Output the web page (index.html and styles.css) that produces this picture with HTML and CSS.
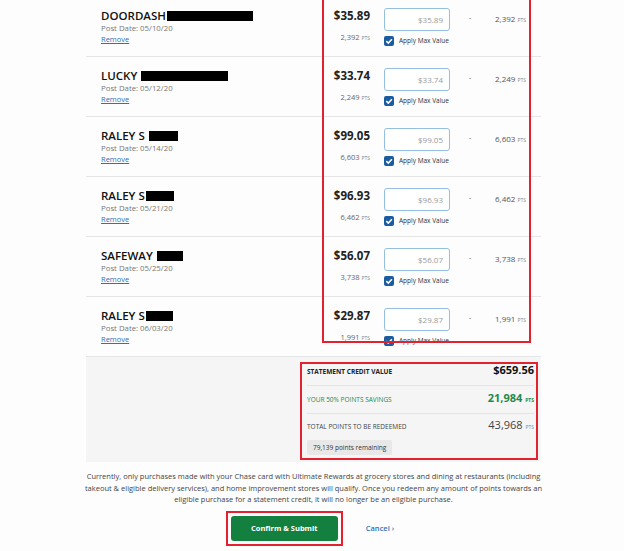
FILE: index.html
```html
<!DOCTYPE html>
<html lang="en">
  <head>
    <meta charset="UTF-8" />
    <meta name="viewport" content="width=device-width, initial-scale=1.0" />
    <title>Pay Yourself Back - Review</title>
    <link rel="stylesheet" href="styles.css">
  </head>
  <body>
    <div class="page">
      <div class="transactions">
        <!-- Highlighted region drawn over the value columns -->
        <div class="mark mark-values"></div>

        <div class="txn-row">
          <div class="merchant">
            <div class="merchant-name">DOORDASH<span class="redact" style="width: 86px"></span></div>
            <div class="post-date">Post Date: 05/10/20</div>
            <a href="#" class="remove-link">Remove</a>
          </div>
          <div class="amount">
            <div class="amount-value">$35.89</div>
            <div class="amount-pts">2,392 <span class="pts">PTS</span></div>
          </div>
          <div class="redeem">
            <input type="text" class="redeem-input" placeholder="$35.89" />
            <label class="apply-max"><span class="check"><svg viewBox="0 0 10 10"><path d="M2.3 5.1 L4.3 7.1 L7.9 3.2" /></svg></span>Apply Max Value</label>
          </div>
          <div class="equals">-</div>
          <div class="redeem-pts">2,392 <span class="pts">PTS</span></div>
        </div>

        <div class="txn-row">
          <div class="merchant">
            <div class="merchant-name">LUCKY <span class="redact" style="width: 87px"></span></div>
            <div class="post-date">Post Date: 05/12/20</div>
            <a href="#" class="remove-link">Remove</a>
          </div>
          <div class="amount">
            <div class="amount-value">$33.74</div>
            <div class="amount-pts">2,249 <span class="pts">PTS</span></div>
          </div>
          <div class="redeem">
            <input type="text" class="redeem-input" placeholder="$33.74" />
            <label class="apply-max"><span class="check"><svg viewBox="0 0 10 10"><path d="M2.3 5.1 L4.3 7.1 L7.9 3.2" /></svg></span>Apply Max Value</label>
          </div>
          <div class="equals">-</div>
          <div class="redeem-pts">2,249 <span class="pts">PTS</span></div>
        </div>

        <div class="txn-row">
          <div class="merchant">
            <div class="merchant-name">RALEY S <span class="redact" style="width: 29px"></span></div>
            <div class="post-date">Post Date: 05/14/20</div>
            <a href="#" class="remove-link">Remove</a>
          </div>
          <div class="amount">
            <div class="amount-value">$99.05</div>
            <div class="amount-pts">6,603 <span class="pts">PTS</span></div>
          </div>
          <div class="redeem">
            <input type="text" class="redeem-input" placeholder="$99.05" />
            <label class="apply-max"><span class="check"><svg viewBox="0 0 10 10"><path d="M2.3 5.1 L4.3 7.1 L7.9 3.2" /></svg></span>Apply Max Value</label>
          </div>
          <div class="equals">-</div>
          <div class="redeem-pts">6,603 <span class="pts">PTS</span></div>
        </div>

        <div class="txn-row">
          <div class="merchant">
            <div class="merchant-name">RALEY S<span class="redact" style="width: 28px"></span></div>
            <div class="post-date">Post Date: 05/21/20</div>
            <a href="#" class="remove-link">Remove</a>
          </div>
          <div class="amount">
            <div class="amount-value">$96.93</div>
            <div class="amount-pts">6,462 <span class="pts">PTS</span></div>
          </div>
          <div class="redeem">
            <input type="text" class="redeem-input" placeholder="$96.93" />
            <label class="apply-max"><span class="check"><svg viewBox="0 0 10 10"><path d="M2.3 5.1 L4.3 7.1 L7.9 3.2" /></svg></span>Apply Max Value</label>
          </div>
          <div class="equals">-</div>
          <div class="redeem-pts">6,462 <span class="pts">PTS</span></div>
        </div>

        <div class="txn-row">
          <div class="merchant">
            <div class="merchant-name">SAFEWAY <span class="redact" style="width: 26px"></span></div>
            <div class="post-date">Post Date: 05/25/20</div>
            <a href="#" class="remove-link">Remove</a>
          </div>
          <div class="amount">
            <div class="amount-value">$56.07</div>
            <div class="amount-pts">3,738 <span class="pts">PTS</span></div>
          </div>
          <div class="redeem">
            <input type="text" class="redeem-input" placeholder="$56.07" />
            <label class="apply-max"><span class="check"><svg viewBox="0 0 10 10"><path d="M2.3 5.1 L4.3 7.1 L7.9 3.2" /></svg></span>Apply Max Value</label>
          </div>
          <div class="equals">-</div>
          <div class="redeem-pts">3,738 <span class="pts">PTS</span></div>
        </div>

        <div class="txn-row">
          <div class="merchant">
            <div class="merchant-name">RALEY S<span class="redact" style="width: 27px"></span></div>
            <div class="post-date">Post Date: 06/03/20</div>
            <a href="#" class="remove-link">Remove</a>
          </div>
          <div class="amount">
            <div class="amount-value">$29.87</div>
            <div class="amount-pts">1,991 <span class="pts">PTS</span></div>
          </div>
          <div class="redeem">
            <input type="text" class="redeem-input" placeholder="$29.87" />
            <label class="apply-max"><span class="check"><svg viewBox="0 0 10 10"><path d="M2.3 5.1 L4.3 7.1 L7.9 3.2" /></svg></span>Apply Max Value</label>
          </div>
          <div class="equals">-</div>
          <div class="redeem-pts">1,991 <span class="pts">PTS</span></div>
        </div>
      </div>

      <div class="summary">
        <div class="totals mark">
          <div class="totals-row">
            <span class="totals-label strong">STATEMENT CREDIT VALUE</span>
            <span class="totals-value strong">$659.56</span>
          </div>
          <div class="totals-row savings">
            <span class="totals-label">YOUR 50% POINTS SAVINGS</span>
            <span class="totals-value strong">21,984 <span class="pts">PTS</span></span>
          </div>
          <div class="totals-row total">
            <span class="totals-label">TOTAL POINTS TO BE REDEEMED</span>
            <span class="totals-value">43,968 <span class="pts">PTS</span></span>
          </div>
          <div class="remaining">79,139 points remaining</div>
        </div>
      </div>

      <p class="disclaimer">
        Currently, only purchases made with your Chase card with Ultimate Rewards at grocery stores and dining at restaurants (including<br />
        takeout &amp; eligible delivery services), and home improvement stores will qualify. Once you redeem any amount of points towards an<br />
        eligible purchase for a statement credit, it will no longer be an eligible purchase.
      </p>

      <div class="actions">
        <div class="mark submit-mark">
          <button type="button" class="submit-btn">Confirm &amp; Submit</button>
        </div>
        <a href="#" class="cancel-link">Cancel ›</a>
      </div>
    </div>
  </body>
</html>
```

FILE: styles.css
```css
body {
  margin: 0;
  background-color: #fdfdfd;
  font-family: "Open Sans", "Noto Sans", sans-serif;
  color: #333;
}

.page {
  width: 455px;
  margin-left: 86px;
}

.mark {
  border: 2px solid #e3212f;
}

/* Transactions */
.transactions {
  position: relative;
  margin-top: -3px;
}

.mark-values {
  position: absolute;
  left: 236px;
  top: -6px;
  width: 205px;
  height: 348px;
  pointer-events: none;
}

.txn-row {
  display: grid;
  grid-template-columns: 236px 62px 66px 40px 36px 15px;
  height: 59px;
  border-bottom: 1px solid #e6e6e6;
}

.merchant {
  padding: 12px 0 0 15px;
}

.merchant-name {
  font-size: 11.5px;
  line-height: 14px;
  font-weight: 600;
  color: #111;
  white-space: nowrap;
}

.redact {
  display: inline-block;
  height: 10px;
  margin-left: 1px;
  vertical-align: -1px;
  background-color: #000;
}

.post-date {
  font-size: 7.8px;
  line-height: 11px;
  color: #777;
}

.remove-link {
  display: block;
  font-size: 7.5px;
  line-height: 11px;
  color: #2f72b8;
  text-decoration: underline;
}

.amount {
  padding: 12px 14px 0 0;
  text-align: right;
}

.amount-value {
  font-size: 11.5px;
  line-height: 14px;
  font-weight: 700;
  color: #222;
}

.amount-pts {
  margin-top: 9px;
  font-size: 7.5px;
  line-height: 11px;
  color: #666;
}

.pts {
  font-size: 5px;
  color: #888;
}

.redeem {
  padding-top: 11px;
}

.redeem-input {
  display: block;
  box-sizing: border-box;
  width: 66px;
  height: 23px;
  padding: 0 6px 0 0;
  border: 1px solid #94bfe2;
  border-radius: 3px;
  background-color: #fff;
  font-family: inherit;
  font-size: 8px;
  text-align: right;
  outline: none;
}

.redeem-input::placeholder {
  color: #999;
}

.apply-max {
  display: flex;
  align-items: center;
  gap: 5px;
  margin-top: 5px;
  font-size: 6.5px;
  line-height: 10px;
  color: #333;
  white-space: nowrap;
}

.check {
  display: inline-flex;
  flex-shrink: 0;
  width: 10px;
  height: 10px;
  border-radius: 2px;
  background-color: #1b5c9f;
}

.check svg {
  width: 10px;
  height: 10px;
}

.check path {
  fill: none;
  stroke: #fff;
  stroke-width: 1.5;
}

.equals {
  padding-top: 14px;
  font-size: 8px;
  line-height: 12px;
  text-align: center;
  color: #666;
}

.redeem-pts {
  padding-top: 16px;
  font-size: 8px;
  line-height: 12px;
  text-align: right;
  color: #555;
  white-space: nowrap;
}

/* Summary */
.summary {
  display: flex;
  justify-content: flex-end;
  padding: 5px 3px 2px 0;
  background-color: #f5f5f5;
}

.totals {
  width: 227px;
  padding: 0 2px 3px 5px;
}

.totals-row {
  display: flex;
  justify-content: space-between;
  align-items: baseline;
  line-height: 12px;
}

.totals-row + .totals-row {
  border-top: 1px solid #e4e4e4;
}

.totals-row:first-child {
  height: 21px;
}

.totals-row.savings {
  height: 21px;
  padding-top: 6px;
  color: #248a4c;
}

.totals-row.total {
  padding-top: 5px;
  color: #444;
}

.totals-label {
  font-size: 6.5px;
  color: inherit;
}

.totals-label.strong {
  font-weight: 700;
  color: #222;
}

.totals-value {
  font-size: 11px;
  color: #444;
}

.totals-value.strong {
  font-weight: 700;
  color: #111;
}

.savings .totals-value.strong,
.savings .pts {
  color: #248a4c;
}

.savings .pts {
  font-weight: 700;
}

.remaining {
  display: inline-block;
  margin-top: 7px;
  padding: 0 6px;
  height: 15px;
  line-height: 15px;
  border-radius: 2px;
  background-color: #e8e8e8;
  font-size: 6.5px;
  color: #333;
}

/* Footer */
.disclaimer {
  margin: 9px -10px 0;
  font-size: 7.5px;
  line-height: 11.5px;
  text-align: center;
  color: #444;
  white-space: nowrap;
}

.actions {
  display: flex;
  justify-content: center;
  align-items: center;
  gap: 23px;
  margin-top: 5px;
  padding-right: 7px;
}

.submit-mark {
  padding: 3px;
}

.submit-btn {
  display: block;
  width: 107px;
  height: 25px;
  border: none;
  border-radius: 3px;
  background-color: #13803f;
  color: #fff;
  font-family: inherit;
  font-size: 7.5px;
  font-weight: 700;
  cursor: pointer;
}

.cancel-link {
  font-size: 7.5px;
  font-weight: 600;
  color: #2f72b8;
  text-decoration: none;
}
```
